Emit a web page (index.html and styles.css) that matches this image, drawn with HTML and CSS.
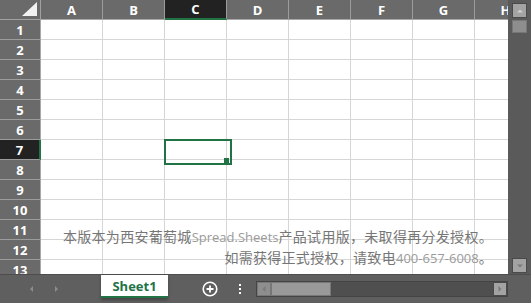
FILE: index.html
```html
<!DOCTYPE html>
<html lang="zh-CN">
<head>
  <meta charset="UTF-8" />
  <title>Spread.Sheets</title>
  <link rel="stylesheet" href="styles.css">
</head>
<body>
  <div class="workbook">
    <div class="viewport">
      <div id="sheet" class="sheet"></div>

      <!-- trial watermark -->
      <div class="watermark">
        <p>本版本为西安葡萄城<span class="brand">Spread.Sheets</span>产品试用版，未取得再分发授权。</p>
        <p>如需获得正式授权，请致电<span class="phone">400-657-6008</span>。</p>
      </div>

      <div class="vscroll">
        <div class="sb-btn up"></div>
        <div class="vthumb"></div>
        <div class="vtrack"></div>
        <div class="sb-btn down"></div>
      </div>
    </div>

    <div class="tabbar">
      <div class="tab-nav">
        <span class="nav-arrow left"></span>
        <span class="nav-arrow right"></span>
      </div>
      <div class="sheet-tab">Sheet1</div>
      <div class="new-tab">
        <svg width="16" height="16" viewBox="0 0 16 16">
          <circle cx="8" cy="8" r="6.8" fill="none" stroke="#fff" stroke-width="1.6"/>
          <path d="M8 4.5v7M4.5 8h7" stroke="#fff" stroke-width="1.8"/>
        </svg>
      </div>
      <div class="tab-dots"><i></i><i></i><i></i></div>
      <div class="hscroll">
        <div class="sb-btn left"></div>
        <div class="hthumb"></div>
        <div class="htrack"></div>
        <div class="sb-btn right"></div>
      </div>
    </div>
  </div>

  <script>
    const cols = ['A', 'B', 'C', 'D', 'E', 'F', 'G', 'H'];
    const sheet = document.getElementById('sheet');

    function cell(cls, text) {
      const el = document.createElement('div');
      el.className = cls;
      if (text) el.textContent = text;
      sheet.appendChild(el);
      return el;
    }

    cell('corner');
    cols.forEach(c => cell(c === 'C' ? 'col-head current' : 'col-head', c));

    for (let r = 1; r <= 13; r++) {
      cell(r === 7 ? 'row-head current' : 'row-head', String(r));
      cols.forEach(c => cell(r === 7 && c === 'C' ? 'cell active' : 'cell'));
    }
  </script>
</body>
</html>
```

FILE: styles.css
```css
* { margin: 0; padding: 0; box-sizing: border-box; }

body {
  font-family: 'Open Sans', 'Noto Sans', sans-serif;
  background: #fff;
}

.workbook {
  width: 531px;
  height: 303px;
  background: #5f5f5f;
  display: flex;
  flex-direction: column;
  overflow: hidden;
}

.viewport {
  height: 274px;
  display: flex;
  position: relative;
}

.sheet {
  width: 508px;
  height: 274px;
  overflow: hidden;
  display: grid;
  grid-template-columns: 41px repeat(8, 62px);
  grid-auto-rows: 20px;
  background: #fff;
}

.cell {
  border-right: 1px solid #d6d6d6;
  border-bottom: 1px solid #d6d6d6;
  position: relative;
}

.cell.active::after {
  content: '';
  position: absolute;
  left: -1px;
  top: -1px;
  width: 64px;
  height: 22px;
  border: 2px solid #217346;
  z-index: 2;
}

.cell.active::before {
  content: '';
  position: absolute;
  right: -3px;
  bottom: -4px;
  width: 5px;
  height: 5px;
  background: #217346;
  z-index: 3;
}

.corner {
  background: #6a6a6a;
  border-right: 1px solid #a0a0a0;
  border-bottom: 1px solid #a0a0a0;
  position: relative;
}

.corner::after {
  content: '';
  position: absolute;
  right: 3px;
  bottom: 3px;
  width: 15px;
  height: 14px;
  background: #f2f2f2;
  clip-path: polygon(100% 0, 100% 100%, 0 100%);
}

.col-head,
.row-head {
  background: #6a6a6a;
  color: #fff;
  font-weight: 700;
  font-size: 13px;
  display: flex;
  align-items: center;
  justify-content: center;
}

.col-head {
  border-right: 1px solid #9c9c9c;
  border-bottom: 1px solid #a8a8a8;
}

.row-head {
  border-right: 1px solid #a8a8a8;
  border-bottom: 1px solid #9c9c9c;
}

.col-head.current {
  background: #222;
  border-bottom: 2px solid #217346;
}

.row-head.current {
  background: #222;
  border-right: 2px solid #217346;
}

.watermark {
  position: absolute;
  right: 38px;
  top: 226px;
  text-align: right;
  font-family: 'Noto Sans CJK SC', 'Noto Sans', sans-serif;
  font-size: 14px;
  line-height: 20px;
  letter-spacing: 0.3px;
  color: #767676;
  z-index: 5;
}

.watermark .brand,
.watermark .phone {
  font-family: 'Open Sans', sans-serif;
  color: #9a9a9a;
  letter-spacing: 0;
}

.watermark .brand { font-size: 13px; }
.watermark .phone { font-size: 13px; }

.vscroll {
  width: 23px;
  background: #5a5a5a;
  display: flex;
  flex-direction: column;
  align-items: center;
  padding: 3px 0 1px;
}

.vtrack,
.htrack { flex: 1; }

.vthumb {
  width: 15px;
  height: 13px;
  margin-top: 2px;
  background: #8e8e8e;
  border: 1px solid #777;
}

.sb-btn {
  width: 15px;
  height: 15px;
  background: #a3a3a3;
  border: 1px solid #4a4a4a;
  position: relative;
}

.sb-btn::after {
  content: '';
  position: absolute;
  left: 50%;
  top: 50%;
  border: 3px solid transparent;
}

.sb-btn.up::after { border-bottom-color: #d0d0d0; transform: translate(-50%, -75%); }
.sb-btn.down::after { border-top-color: #7a7a7a; transform: translate(-50%, -25%); }
.sb-btn.left::after { border-right-color: #7a7a7a; transform: translate(-75%, -50%); }
.sb-btn.right::after { border-left-color: #7a7a7a; transform: translate(-25%, -50%); }

.tabbar {
  flex: 1;
  display: flex;
  align-items: flex-start;
  background: #5f5f5f;
  border-top: 1px solid #4d4d4d;
}

.tab-nav {
  width: 101px;
  height: 28px;
  display: flex;
  align-items: center;
  gap: 22px;
  padding-left: 27px;
}

.nav-arrow {
  width: 0;
  height: 0;
  border: 3px solid transparent;
}

.nav-arrow.left { border-right-color: #8c8c8c; }
.nav-arrow.right { border-left-color: #8c8c8c; }

.sheet-tab {
  width: 67px;
  height: 23px;
  background: #fff;
  border-bottom: 2px solid #217346;
  color: #217346;
  font-weight: 700;
  font-size: 13px;
  display: flex;
  align-items: center;
  justify-content: center;
  box-shadow: 0 2px 3px rgba(0, 0, 0, 0.3);
}

.new-tab {
  margin-left: 34px;
  height: 28px;
  display: flex;
  align-items: center;
}

.tab-dots {
  margin-left: 21px;
  height: 28px;
  display: flex;
  flex-direction: column;
  justify-content: center;
  gap: 2px;
}

.tab-dots i {
  width: 2px;
  height: 2px;
  background: #fff;
}

.hscroll {
  margin-left: 15px;
  margin-top: 6px;
  width: 252px;
  height: 16px;
  display: flex;
  align-items: center;
  background: #4f4f4f;
  border: 1px solid #444;
}

.hscroll .sb-btn {
  width: 14px;
  height: 14px;
}

.hscroll .sb-btn.left {
  background: #8e8e8e;
  border-color: #777;
}

.hthumb {
  width: 60px;
  height: 14px;
  background: #999;
  border: 1px solid #777;
}
```
